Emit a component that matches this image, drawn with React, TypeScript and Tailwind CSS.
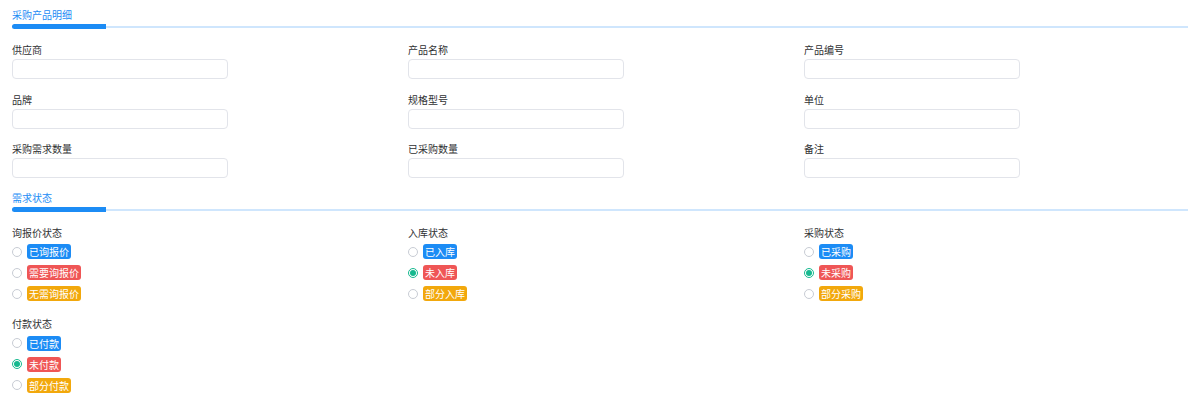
import React from "react";

type Opt = { label: string; color: "blue" | "red" | "orange" };

const badgeColor: Record<Opt["color"], string> = {
  blue: "bg-[#1c8cf5]",
  red: "bg-[#ef5656]",
  orange: "bg-[#f2a80c]",
};

function SectionTitle({ title }: { title: string }) {
  return (
    <div className="pt-[8px]">
      <div className="text-[10px] leading-[14px] text-[#1c8cf5]">{title}</div>
      <div className="relative mt-[2px] h-[5px]">
        <div className="absolute left-0 right-[12px] top-[2px] h-[2px] bg-[#cfe6fd]" />
        <div className="absolute left-0 top-0 h-[5px] w-[94px] rounded-l-full rounded-tr-[3px] bg-[#1c8cf5]" />
      </div>
    </div>
  );
}

function Field({ label }: { label: string }) {
  return (
    <div className="w-[397px]">
      <div className="text-[10px] leading-[14px] text-[#303133]">{label}</div>
      <div className="mt-[2px] h-[20px] w-[216px] rounded-[4px] border border-[#e2e4ea] bg-white" />
    </div>
  );
}

function RadioGroup({
  label,
  options,
  checked,
}: {
  label: string;
  options: Opt[];
  checked?: number;
}) {
  return (
    <div className="w-[397px]">
      <div className="text-[10px] leading-[14px] text-[#303133]">{label}</div>
      <div className="mt-[4.5px] flex flex-col gap-[6px]">
        {options.map((o, i) => (
          <div key={o.label} className="flex h-[15px] items-center">
            {checked === i ? (
              <span className="flex h-[10px] w-[10px] items-center justify-center rounded-full border border-[#16b98f] bg-white">
                <span className="h-[6px] w-[6px] rounded-full bg-[#16b98f]" />
              </span>
            ) : (
              <span className="h-[10px] w-[10px] rounded-full border border-[#c8ccd4] bg-white" />
            )}
            <span
              className={`ml-[5px] h-[15px] rounded-[3px] px-[2px] text-[10px] leading-[15px] text-white ${badgeColor[o.color]}`}
            >
              {o.label}
            </span>
          </div>
        ))}
      </div>
    </div>
  );
}

export default function App() {
  return (
    <div
      className="h-[397px] w-[1200px] overflow-hidden bg-white pl-[12px]"
      style={{ fontFamily: '"Noto Sans CJK SC", "Noto Sans", sans-serif' }}
    >
      <SectionTitle title="采购产品明细" />

      <div className="mt-[14px] flex flex-col gap-[13.5px]">
        <div className="flex">
          <Field label="供应商" />
          <Field label="产品名称" />
          <Field label="产品编号" />
        </div>
        <div className="flex">
          <Field label="品牌" />
          <Field label="规格型号" />
          <Field label="单位" />
        </div>
        <div className="flex">
          <Field label="采购需求数量" />
          <Field label="已采购数量" />
          <Field label="备注" />
        </div>
      </div>

      <div className="mt-[4.5px]">
        <SectionTitle title="需求状态" />
      </div>

      <div className="mt-[14px] flex">
        <RadioGroup
          label="询报价状态"
          options={[
            { label: "已询报价", color: "blue" },
            { label: "需要询报价", color: "red" },
            { label: "无需询报价", color: "orange" },
          ]}
        />
        <RadioGroup
          label="入库状态"
          checked={1}
          options={[
            { label: "已入库", color: "blue" },
            { label: "未入库", color: "red" },
            { label: "部分入库", color: "orange" },
          ]}
        />
        <RadioGroup
          label="采购状态"
          checked={1}
          options={[
            { label: "已采购", color: "blue" },
            { label: "未采购", color: "red" },
            { label: "部分采购", color: "orange" },
          ]}
        />
      </div>

      <div className="mt-[16px] flex">
        <RadioGroup
          label="付款状态"
          checked={1}
          options={[
            { label: "已付款", color: "blue" },
            { label: "未付款", color: "red" },
            { label: "部分付款", color: "orange" },
          ]}
        />
      </div>
    </div>
  );
}
